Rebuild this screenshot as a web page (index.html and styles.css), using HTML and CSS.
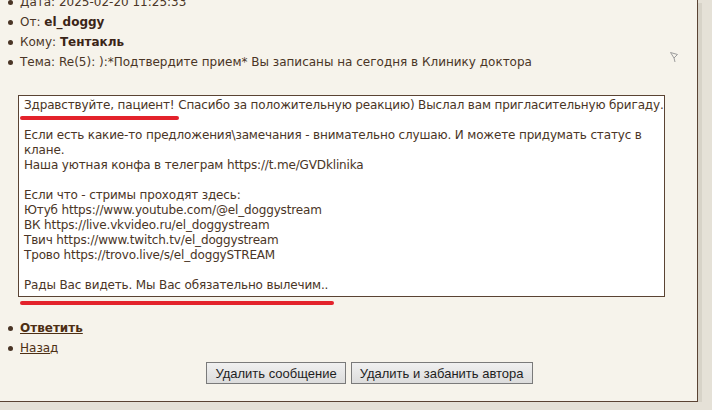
FILE: index.html
```html
<!DOCTYPE html>
<html>
<head>
  <meta charset="utf-8">
  <title>Сообщение</title>
  <link rel="stylesheet" href="styles.css">
</head>
<body>
  <div class="panel">
    <!-- message header -->
    <ul class="meta">
      <li>Дата: 2025-02-20 11:25:33</li>
      <li>От: <b>el_doggy</b></li>
      <li>Кому: <b>Тентакль</b></li>
      <li class="subject">
        <span>Тема: Re(5): ):*Подтвердите прием* Вы записаны на сегодня в Клинику доктора</span>
        <svg class="flag" width="10" height="12" viewBox="0 0 10 12">
          <path d="M1.5 1.5 L8.5 3.5 L5 7 Z M5 7 L6 11" fill="none" stroke="#9c9c9c" stroke-width="1"/>
        </svg>
      </li>
    </ul>

    <div class="message">
      Здравствуйте, пациент! Спасибо за положительную реакцию) Выслал вам пригласительную бригаду.<br>
      <br>
      Если есть какие-то предложения\замечания - внимательно слушаю. И можете придумать статус в<br>
      клане.<br>
      Наша уютная конфа в телеграм https://t.me/GVDklinika<br>
      <br>
      Если что - стримы проходят здесь:<br>
      Ютуб https://www.youtube.com/@el_doggystream<br>
      ВК https://live.vkvideo.ru/el_doggystream<br>
      Твич https://www.twitch.tv/el_doggystream<br>
      Трово https://trovo.live/s/el_doggySTREAM<br>
      <br>
      Рады Вас видеть. Мы Вас обязательно вылечим..
    </div>

    <ul class="actions">
      <li><a href="#"><b>Ответить</b></a></li>
      <li><a href="#">Назад</a></li>
    </ul>

    <div class="buttons">
      <button>Удалить сообщение</button>
      <button>Удалить и забанить автора</button>
    </div>

    <!-- red marker strokes drawn over the screenshot -->
    <div class="mark mark-top"></div>
    <div class="mark mark-bottom"></div>
  </div>
</body>
</html>
```

FILE: styles.css
```css
body {
  margin: 0;
  background: #e5e1d7;
  overflow: hidden;
  font-family: "DejaVu Sans", Verdana, sans-serif;
  font-size: 12px;
  color: #4a3526;
}

.panel {
  position: relative;
  width: 697px;
  height: 401px;
  background: #f6f3eb;
  border-right: 1px solid #5a4333;
  border-bottom: 1px solid #5a4333;
  box-shadow: 4px 3px 0 #d7d3c8;
  overflow: hidden;
}

ul {
  list-style: none;
  margin: 0;
  padding: 0;
}

.meta li,
.actions li {
  line-height: 20px;
  padding-left: 20px;
}

.meta li::before,
.actions li::before {
  content: "";
  display: inline-block;
  width: 5px;
  height: 5px;
  border-radius: 50%;
  background: #4a3526;
  margin-left: -12px;
  margin-right: 7px;
  vertical-align: middle;
}

.meta {
  margin-top: -8px;
}

.meta b {
  color: #3b2517;
}

.subject {
  display: flex;
  align-items: flex-start;
  padding-right: 18px;
}

.subject span {
  flex: 1;
}

.subject::before {
  margin-top: 8px;
}

.flag {
  margin-top: -1px;
}

.message {
  margin: 23px 32px 0 18px;
  padding: 2px 5px 3px 5px;
  background: #fff;
  border: 1px solid #5a4333;
  line-height: 15px;
  letter-spacing: -0.15px;
  white-space: nowrap;
}

.actions {
  margin-top: 21px;
}

.actions a {
  color: #4d2f14;
}

.actions b {
  color: #4d2f14;
}

.buttons {
  display: flex;
  justify-content: center;
  gap: 5px;
  padding-left: 42px;
  margin-top: 4px;
}

.buttons button {
  height: 22px;
  padding: 0 8px;
  font-family: "Liberation Sans", Arial, sans-serif;
  font-size: 13px;
  color: #1e1e1e;
  background: linear-gradient(#f0f0f0, #dcdcdc);
  border: 1px solid #7a7a7a;
  border-radius: 0;
}

.mark {
  position: absolute;
  height: 4px;
  border-radius: 2px;
  background: #e3222b;
}

.mark-top {
  left: 20px;
  top: 116px;
  width: 159px;
}

.mark-bottom {
  left: 20px;
  top: 301px;
  width: 314px;
}
```
